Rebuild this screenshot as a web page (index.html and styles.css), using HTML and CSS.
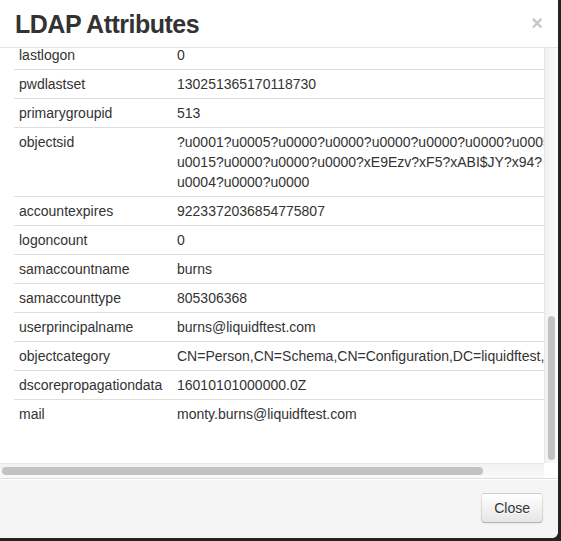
FILE: index.html
```html
<!DOCTYPE html>
<html>
<head>
<meta charset="utf-8">
<title>LDAP Attributes</title>
<link rel="stylesheet" href="styles.css">
</head>
<body>
<div class="modal">
  <div class="modal-header">
    <h3 class="modal-title">LDAP Attributes</h3>
    <button class="close" type="button">×</button>
  </div>
  <div class="modal-body">
    <div class="scroll-area">
      <div class="viewport">
        <div class="content">
          <table class="attr-table">
            <tbody>
              <tr><td class="key">lastlogon</td><td class="val">0</td></tr>
              <tr><td class="key">pwdlastset</td><td class="val">130251365170118730</td></tr>
              <tr><td class="key">primarygroupid</td><td class="val">513</td></tr>
              <tr><td class="key">objectsid</td><td class="val">?u0001?u0005?u0000?u0000?u0000?u0000?u0000?u0005?<br>u0015?u0000?u0000?u0000?xE9Ezv?xF5?xABI$JY?x94?<br>u0004?u0000?u0000</td></tr>
              <tr><td class="key">accountexpires</td><td class="val">9223372036854775807</td></tr>
              <tr><td class="key">logoncount</td><td class="val">0</td></tr>
              <tr><td class="key">samaccountname</td><td class="val">burns</td></tr>
              <tr><td class="key">samaccounttype</td><td class="val">805306368</td></tr>
              <tr><td class="key">userprincipalname</td><td class="val">burns@liquidftest.com</td></tr>
              <tr><td class="key">objectcategory</td><td class="val">CN=Person,CN=Schema,CN=Configuration,DC=liquidftest,DC=com</td></tr>
              <tr><td class="key">dscorepropagationdata</td><td class="val">16010101000000.0Z</td></tr>
              <tr><td class="key">mail</td><td class="val">monty.burns@liquidftest.com</td></tr>
            </tbody>
          </table>
        </div>
      </div>
      <div class="vscroll"><div class="vthumb"></div></div>
    </div>
    <div class="hscroll-row">
      <div class="hscroll"><div class="hthumb"></div></div>
      <div class="corner"></div>
    </div>
  </div>
  <div class="modal-footer">
    <button class="btn" type="button">Close</button>
  </div>
</div>
</body>
</html>
```
FILE: styles.css
```css
html, body {
  margin: 0;
  padding: 0;
}
body {
  background: #242424;
  font-family: "Liberation Sans", Arial, Helvetica, sans-serif;
  font-size: 14px;
  line-height: 20px;
  color: #333;
  width: 561px;
  height: 541px;
  overflow: hidden;
}
.modal {
  width: 558px;
  height: 538px;
  background: #fff;
  border-bottom-right-radius: 6px;
  display: flex;
  flex-direction: column;
  overflow: hidden;
}
.modal-header {
  height: 47px;
  border-bottom: 1px solid #e5e5e5;
  padding: 0 15px;
  display: flex;
  align-items: center;
  justify-content: space-between;
  flex-shrink: 0;
}
.modal-title {
  margin: 0;
  font-size: 25px;
  font-weight: bold;
  letter-spacing: -0.5px;
  line-height: 30px;
  color: #333;
}
.close {
  border: 0;
  background: none;
  padding: 0;
  margin: 0;
  font-family: "Liberation Sans", Arial, sans-serif;
  font-size: 20px;
  font-weight: bold;
  line-height: 20px;
  color: #000;
  opacity: 0.22;
  margin-top: -2px;
}
.modal-body {
  height: 430px;
  display: flex;
  flex-direction: column;
  flex-shrink: 0;
}
.scroll-area {
  height: 415px;
  display: flex;
}
.viewport {
  width: 544px;
  overflow: hidden;
  display: flex;
  flex-direction: column;
  justify-content: flex-end;
}
.content {
  flex-shrink: 0;
  padding: 15px 15px 15px 14px;
}
.attr-table {
  border-collapse: collapse;
  border-spacing: 0;
  margin-bottom: 20px;
}
.attr-table td {
  padding: 4px 5px;
  line-height: 20px;
  text-align: left;
  vertical-align: top;
  border-top: 1px solid #dddddd;
  white-space: nowrap;
}
.attr-table td.key {
  width: 148px;
  min-width: 148px;
}
.vscroll {
  width: 13px;
  border-left: 1px solid #e6e6e6;
  background: linear-gradient(to right, #f1f1f1, #fbfbfb);
  display: flex;
  flex-direction: column;
  justify-content: flex-end;
  padding: 0 3px 3px 3px;
  box-sizing: border-box;
  width: 14px;
}
.vthumb {
  height: 144px;
  width: 7px;
  border-radius: 4px;
  background: #c2c2c2;
}
.hscroll-row {
  height: 15px;
  display: flex;
}
.hscroll {
  width: 544px;
  box-sizing: border-box;
  border-top: 1px solid #e6e6e6;
  background: linear-gradient(#f1f1f1, #fafafa);
  padding: 3px 2px;
}
.hthumb {
  width: 481px;
  height: 8px;
  border-radius: 4px;
  background: #c2c2c2;
}
.corner {
  flex: 1;
  background: #fff;
}
.modal-footer {
  flex: 1;
  border-top: 1px solid #dddddd;
  background: #f5f5f5;
  box-shadow: inset 0 1px 0 #fff;
  padding: 14px 15px 15px;
  text-align: right;
  border-bottom-right-radius: 6px;
}
.btn {
  display: inline-block;
  padding: 4px 12px;
  margin: 0;
  font-family: "Liberation Sans", Arial, sans-serif;
  font-size: 14px;
  line-height: 20px;
  color: #333;
  text-shadow: 0 1px 1px rgba(255, 255, 255, 0.75);
  background: linear-gradient(#ffffff, #e6e6e6);
  border: 1px solid #cccccc;
  border-color: rgba(0, 0, 0, 0.1) rgba(0, 0, 0, 0.1) rgba(0, 0, 0, 0.25);
  border-bottom-color: #b3b3b3;
  border-radius: 4px;
  box-shadow: inset 0 1px 0 rgba(255, 255, 255, 0.2), 0 1px 2px rgba(0, 0, 0, 0.05);
}
```
